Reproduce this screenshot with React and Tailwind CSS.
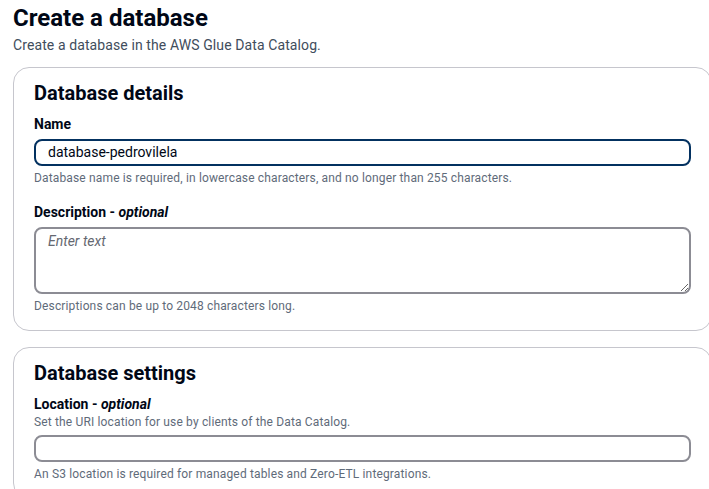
import React from "react";

const FONT = 'Roboto, "Noto Sans", Arial, sans-serif';

function Field({ label, optional, hint, help, children }) {
  return (
    <div className="flex flex-col">
      <label className="text-[14px] leading-[20px] font-bold text-[#000716]">
        {label}
        {optional && <span> - <i>optional</i></span>}
      </label>
      {hint && <p className="text-[12px] leading-[16px] text-[#5f6b7a] tracking-[0.15px]">{hint}</p>}
      <div className="mt-[5px]">{children}</div>
      {help && <p className="text-[12px] leading-[16px] text-[#5f6b7a] tracking-[0.15px] mt-[4px]">{help}</p>}
    </div>
  );
}

export default function App() {
  return (
    <div className="w-[709px] h-[489px] overflow-hidden bg-white" style={{ fontFamily: FONT }}>
      <div className="pl-[13px] pt-[3px]">
        {/* --- HEADER --- */}
        <h1 className="text-[24px] leading-[30px] font-bold text-[#000716]">Create a database</h1>
        <p className="text-[14px] leading-[20px] text-[#414d5c] tracking-[0.1px] mt-[2px]">Create a database in the AWS Glue Data Catalog.</p>

        {/* --- DATABASE DETAILS --- */}
        <div className="w-[699px] mt-[12px] border border-[#c6c6cd] rounded-[16px] px-[20px] pt-[11px] pb-[16px]">
          <h2 className="text-[20px] leading-[28px] font-bold text-[#000716]">Database details</h2>
          <div className="mt-[7px]">
            <Field label="Name" help="Database name is required, in lowercase characters, and no longer than 255 characters.">
              <div className="h-[27px] border-2 border-[#033160] rounded-[8px] flex items-center px-[12px] text-[14px] text-[#000716]">
                database-pedrovilela
              </div>
            </Field>
          </div>
          <div className="mt-[16px]">
            <Field label="Description" optional help="Descriptions can be up to 2048 characters long.">
              <textarea
                placeholder="Enter text"
                className="block w-full h-[67px] border-2 border-[#8c8c94] rounded-[8px] px-[12px] py-[2px] text-[14px] italic placeholder:text-[#656871] outline-none"
                style={{ fontFamily: FONT }}
              />
            </Field>
          </div>
        </div>

        {/* --- DATABASE SETTINGS --- */}
        <div className="w-[699px] mt-[16px] border border-[#c6c6cd] rounded-[16px] px-[20px] pt-[11px] pb-[16px]">
          <h2 className="text-[20px] leading-[28px] font-bold text-[#000716]">Database settings</h2>
          <div className="mt-[7px]">
            <Field label="Location" optional hint="Set the URI location for use by clients of the Data Catalog." help="An S3 location is required for managed tables and Zero-ETL integrations.">
              <div className="h-[27px] border-2 border-[#8c8c94] rounded-[8px]" />
            </Field>
          </div>
        </div>
      </div>
    </div>
  );
}
